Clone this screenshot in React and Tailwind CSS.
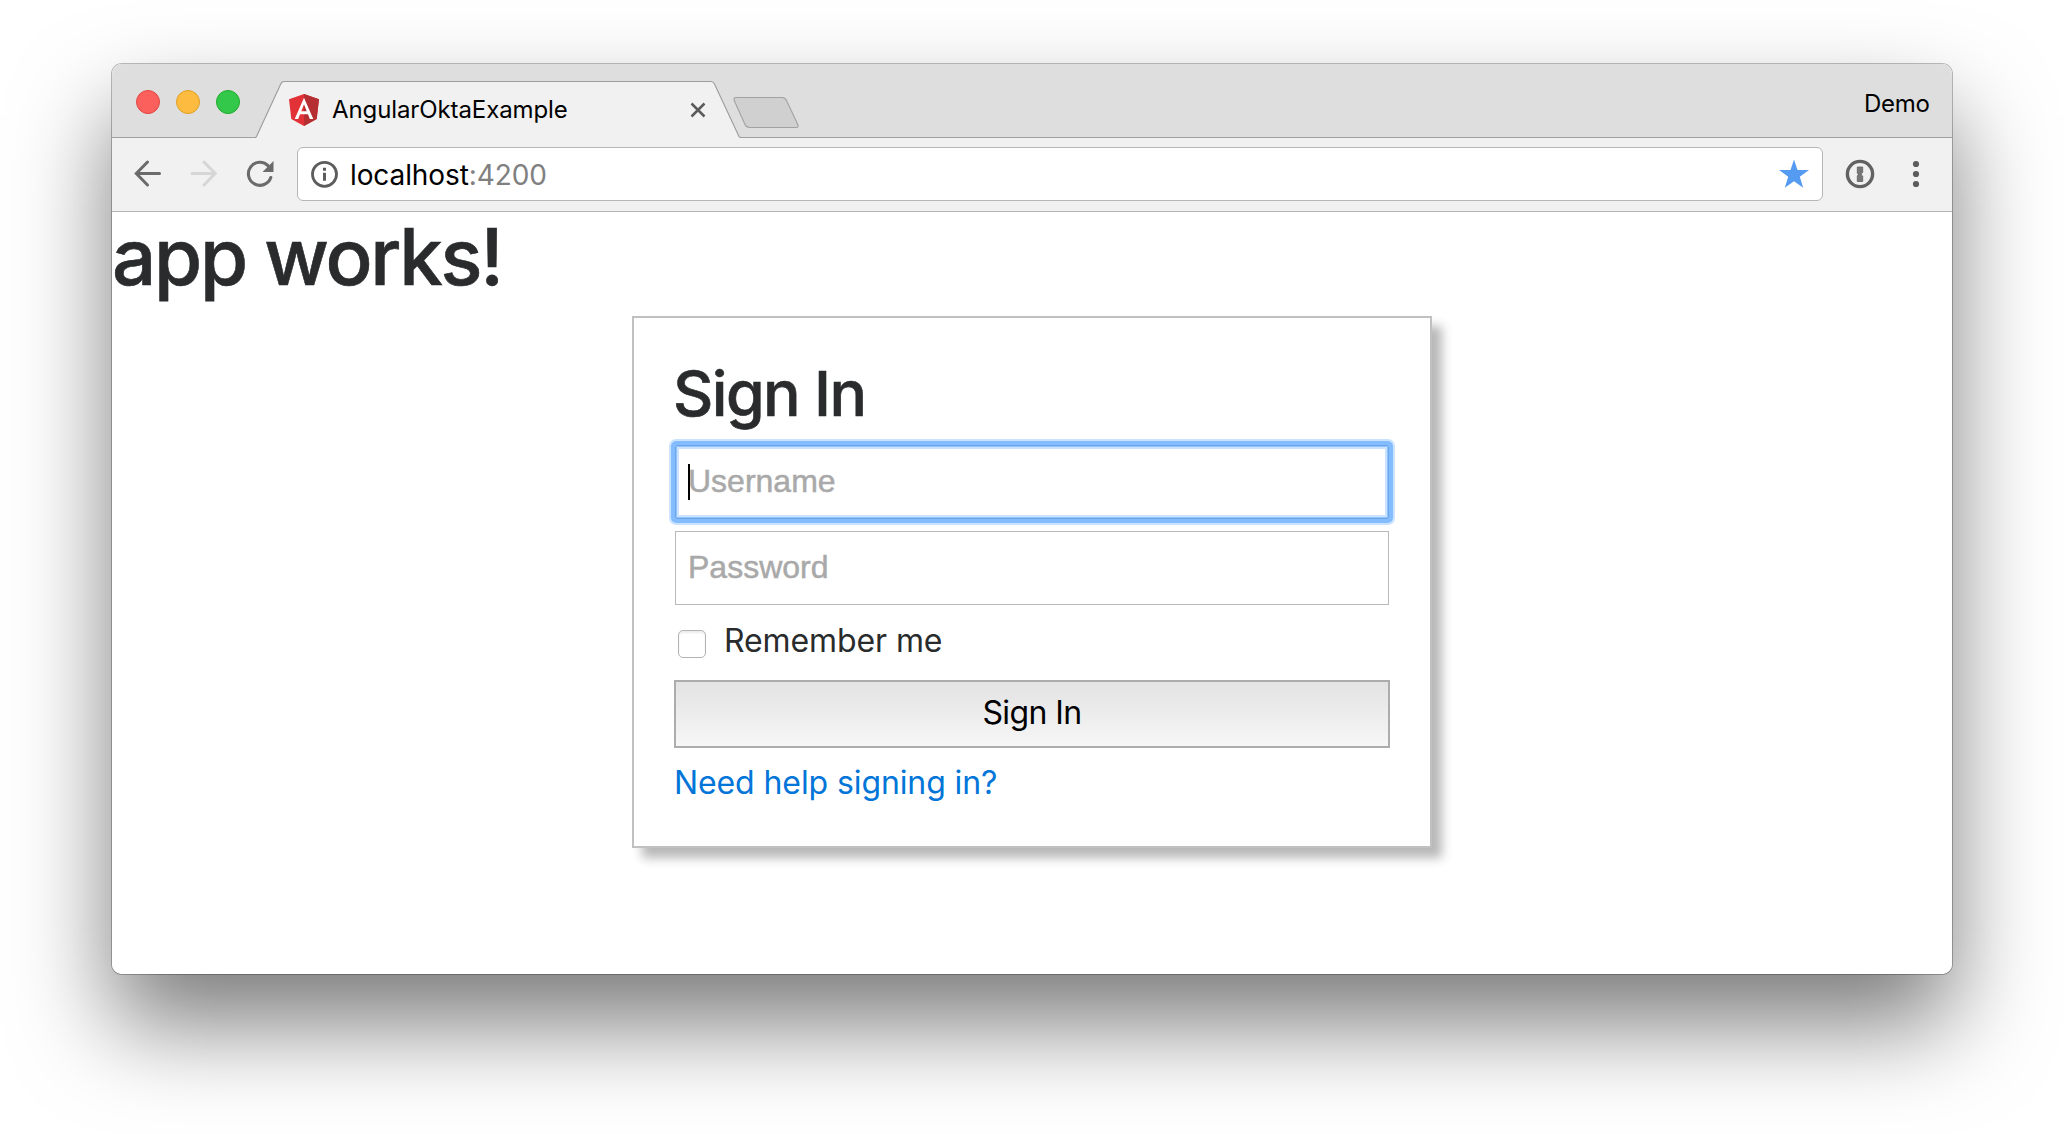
const sans = 'font-["Inter","Liberation_Sans",sans-serif]'

function TabStrip() {
  return (
    <div className="relative flex h-[74px] shrink-0 border-b border-[#a0a0a0] bg-[#dedede]">
      <div className="flex gap-4 pt-[26px] pl-6">
        <span className="size-6 rounded-full border border-[#e2463f] bg-[#fc605c]" />
        <span className="size-6 rounded-full border border-[#dfa023] bg-[#fdbc40]" />
        <span className="size-6 rounded-full border border-[#1dac2b] bg-[#34c84a]" />
      </div>
      <div className="relative -mb-px ml-[15px] flex h-[74px] w-[486px] items-center pt-[17px] pl-[34px]">
        <svg className="absolute top-0 left-0" width="486" height="74" viewBox="0 0 486 74" fill="none">
          <path d="M0 75 V74 Q1 74 1.500 73 L25.500 20.500 Q26.500 17.500 29 17.500 H456 Q458.500 17.500 459.500 20 L484 72.500 Q485 74 486 74 V75 Z" fill="#f1f1f1" />
          <path d="M0 73.500 Q1 73.500 1.500 72.500 L25.500 20.500 Q26.500 17.500 29 17.500 H456 Q458.500 17.500 459.500 20 L484 72.500 Q484.500 73.500 486 73.500" stroke="#9c9c9c" strokeWidth="1.100" />
        </svg>
        <svg className="relative" width="30" height="32" viewBox="0 0 30 32">
          <path d="M15 0 L0 5.300 L2.300 25 L15 32 L27.700 25 L30 5.300 Z" fill="#e23237" />
          <path d="M15 0 V32 L27.700 25 L30 5.300 Z" fill="#b52e31" />
          <path d="M15 3.700 L5.700 25 H9.200 L11 20.300 H19 L20.800 25 H24.300 Z M15 10.300 L17.700 17.300 H12.300 Z" fill="#fff" fillRule="evenodd" />
        </svg>
        <span className="relative ml-[13px] text-2xl tracking-[-0.1px] text-black">AngularOktaExample</span>
        <svg className="absolute top-[38px] left-[435px]" width="16" height="16" viewBox="0 0 16 16" stroke="#5a5a5a" strokeWidth="2.500">
          <path d="M1.500 1.500 L14.500 14.500 M14.500 1.500 L1.500 14.500" />
        </svg>
      </div>
      <svg className="mt-[32px] -ml-[8px]" width="68" height="33" viewBox="0 0 68 33">
        <path d="M2.500 1.500 H49 Q52 1.500 53.500 4.500 L64.800 28.500 Q65.800 31.500 63.300 31.500 H16.500 Q13.500 31.500 12 28.500 L1.200 4.500 Q0.500 1.500 2.500 1.500 Z" fill="#d0d0d0" stroke="#a2a2a2" strokeWidth="1.100" />
      </svg>
      <span className="mt-6 mr-[22.5px] ml-auto text-2xl leading-8 tracking-[-0.3px] text-black">Demo</span>
    </div>
  )
}

function Toolbar() {
  return (
    <div className="flex h-[74px] shrink-0 items-center border-b border-[#b4b4b4] bg-[#f1f1f1] pb-px">
      <svg className="ml-[22px]" width="28" height="28" viewBox="0 0 28 28" fill="none" stroke="#6b6b6b" strokeWidth="3" strokeLinecap="round">
        <path d="M25.500 13.500 H3 M13.500 2 L2.300 13.500 L13.500 25" />
      </svg>
      <svg className="ml-[28px]" width="28" height="28" viewBox="0 0 28 28" fill="none" stroke="#d6d6d6" strokeWidth="3" strokeLinecap="round">
        <path d="M2 13.500 H25 M14 2 L25.200 13.500 L14 25" />
      </svg>
      <svg className="ml-[28px]" width="28" height="28" viewBox="0 0 28 28" fill="none">
        <path d="M22.200 5.800 A11.500 11.500 0 1 0 24.800 17.500" stroke="#6b6b6b" strokeWidth="3.100" strokeLinecap="round" />
        <path d="M27.500 1 V12 H16.500 Z" fill="#6b6b6b" />
      </svg>
      <div className="ml-[23px] flex h-[54px] w-[1526px] items-center rounded-md border border-[#b6b6b6] bg-white">
        <svg className="ml-[13px]" width="28" height="28" viewBox="0 0 28 28">
          <circle cx="13.500" cy="14.300" r="12" fill="none" stroke="#5c5c5c" strokeWidth="2.800" />
          <path d="M12 7.800 H15 V10.800 H12 Z M12 12.800 H15 V20.800 H12 Z" fill="#5c5c5c" />
        </svg>
        <span className="ml-[11px] pt-px text-[28px] tracking-[-0.1px] text-black">
          localhost<span className="text-[#808080]">:4200</span>
        </span>
        <svg className="mr-[13px] ml-auto" width="30" height="30" viewBox="0 0 30 30">
          <path d="M15 0.500 L18.500 11 H30 L20.800 17.700 L24.200 28.800 L15 22.200 L5.800 28.800 L9.200 17.700 L0 11 H11.500 Z" fill="#559bf2" />
        </svg>
      </div>
      <svg className="ml-[22px]" width="30" height="30" viewBox="0 0 30 30">
        <circle cx="15" cy="15" r="12.600" fill="none" stroke="#626262" strokeWidth="3.400" />
        <path d="M12.300 8 H17.700 V13.500 L16.300 14.500 V16 L17.700 17 V22.500 H12.300 V17 L13.300 15.500 L12.300 14 Z" fill="#777" stroke="#626262" strokeWidth="0.800" />
      </svg>
      <svg className="ml-[37px]" width="8" height="28" viewBox="0 0 8 28" fill="#5c5c5c">
        <circle cx="4" cy="4" r="3.100" />
        <circle cx="4" cy="14" r="3.100" />
        <circle cx="4" cy="24" r="3.100" />
      </svg>
    </div>
  )
}

function SignInCard() {
  return (
    <div className="mx-auto flex h-[532px] w-[800px] flex-col border-2 border-[#c0c0c0] bg-white p-10 shadow-[10px_10px_10px_#b8b8b8]">
      <h2 className="-ml-px h-[70px] shrink-0 text-[62.5px] leading-[71px] font-medium tracking-[-1.6px] [-webkit-text-stroke:0.6px_#292b2c]">Sign In</h2>
      <div className='relative mx-px mt-[17px] flex h-[74px] shrink-0 items-center rounded-[1px] border border-[#6aa6e8] pb-0.5 pl-3 font-["Liberation_Sans",sans-serif] text-[32px] text-[#a9a9a9] shadow-[0_0_0_3px_#84bdff,inset_0_0_0_1px_#92c4fb,inset_0_0_0_3px_#cbe3ff]'>
        <span className="absolute -inset-[5px] rounded-[5px] border-4 border-[#84bdff] shadow-[0_0_0_2px_#cbe3ff]" />
        <span className="h-9 w-0.5 translate-y-px bg-black" />
        <span className="-ml-0.5 [-webkit-text-stroke:0.5px_#a9a9a9]">Username</span>
      </div>
      <div className='mx-px mt-3 flex h-[74px] shrink-0 items-center border border-[#b9b9b9] pb-0.5 pl-3 font-["Liberation_Sans",sans-serif] text-[32px] text-[#a9a9a9] [-webkit-text-stroke:0.5px_#a9a9a9]'>
        Password
      </div>
      <label className="mt-3 flex h-12 shrink-0 items-center pl-1">
        <span className="mt-[5px] size-7 rounded-[5px] border border-[#b4b4b4] bg-white shadow-[inset_0_2px_2px_#ececec]" />
        <span className="ml-[18px] text-[32px] leading-[48px] tracking-[-0.1px]">Remember me</span>
      </label>
      <button className="mt-[15px] h-[68px] shrink-0 border-2 border-[#acacac] bg-linear-to-b from-[#e3e3e3] to-[#f6f6f6] pb-0.5 text-[32px] leading-[62px] tracking-[-0.6px] text-black">Sign In</button>
      <a className="mt-[11px] shrink-0 text-[32px] leading-[48px] tracking-[-0.1px] text-[#0275d8]">Need help signing in?</a>
    </div>
  )
}

export default function App() {
  return (
    <div className={`h-[1134px] w-[2064px] overflow-hidden bg-white px-28 pt-16 text-[#292b2c] ${sans}`}>
      <div className="h-[910px] w-[1840px] rounded-[10px] shadow-[0_50px_96px_rgba(0,0,0,0.52),0_0_0_1px_rgba(0,0,0,0.25)]">
        <div className="flex h-full flex-col overflow-hidden rounded-[10px] bg-white">
          <TabStrip />
          <Toolbar />
          <main className="flex-1">
            <h1 className="mb-[14px] text-[78px] leading-[90px] font-medium tracking-[-2.3px] [-webkit-text-stroke:0.6px_#292b2c]">app works!</h1>
            <SignInCard />
          </main>
        </div>
      </div>
    </div>
  )
}
